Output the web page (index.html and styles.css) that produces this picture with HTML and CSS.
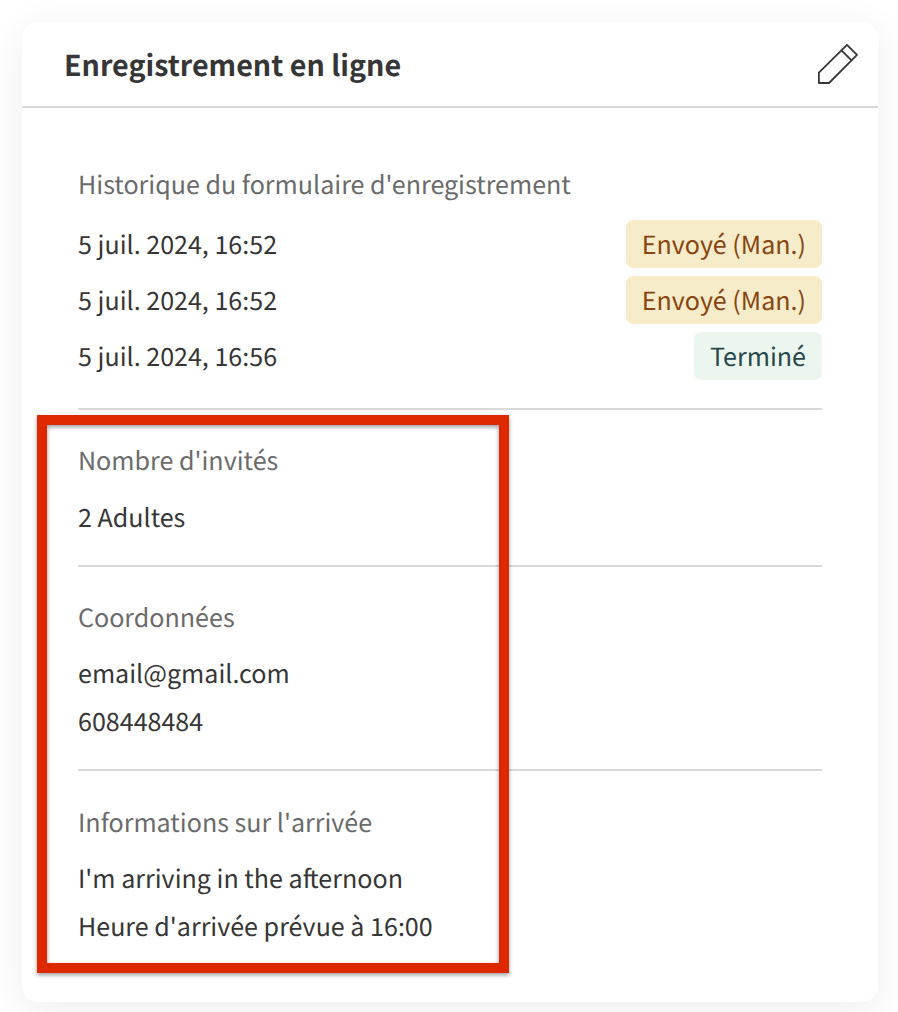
FILE: index.html
```html
<!DOCTYPE html>
<html lang="fr">
<head>
<meta charset="utf-8">
<title>Enregistrement en ligne</title>
<link rel="stylesheet" href="styles.css">
</head>
<body>
<main class="card">
  <header class="card-header">
    <h1 class="card-title">Enregistrement en ligne</h1>
    <svg class="edit" viewBox="0 0 44 44" width="44" height="44" fill="none" stroke="#363636" stroke-width="1.8" stroke-linejoin="round"><path d="M2.900 41V30.700L31 2.900L41 12.900L13 41ZM25.500 8.300L35.500 18.300"/></svg>
  </header>
  <div class="card-body">
    <section class="section history">
      <h2 class="label">Historique du formulaire d'enregistrement</h2>
      <div class="row"><span>5 juil. 2024, 16:52</span><span class="badge sent">Envoyé (Man.)</span></div>
      <div class="row"><span>5 juil. 2024, 16:52</span><span class="badge sent">Envoyé (Man.)</span></div>
      <div class="row"><span>5 juil. 2024, 16:56</span><span class="badge done">Terminé</span></div>
    </section>
    <section class="section guests">
      <h2 class="label">Nombre d'invités</h2>
      <p class="line">2 Adultes</p>
    </section>
    <section class="section contact">
      <h2 class="label">Coordonnées</h2>
      <p class="line">email@gmail.com</p>
      <p class="line">608448484</p>
    </section>
    <section class="section arrival">
      <h2 class="label">Informations sur l'arrivée</h2>
      <p class="line">I'm arriving in the a<span class="kern">f</span>ternoon</p>
      <p class="line">Heure d'arrivée prévue à 16:00</p>
    </section>
  </div>
</main>
<div class="highlight"></div>
</body>
</html>
```
FILE: styles.css
```css
* { box-sizing: border-box; }
body {
  margin: 0;
  padding: 22px 20px 10px 22px;
  height: 1012px;
  overflow: hidden;
  position: relative;
  background: #fff;
  color: #363636;
  font-family: "Noto Sans CJK SC", "Noto Sans", sans-serif;
  font-size: 25.07px;
  text-rendering: geometricPrecision;
}
h1, h2, p { margin: 0; }
.card {
  height: 980px;
  border-radius: 16px;
  background: #fff;
  box-shadow: 0 8px 40px rgba(0, 0, 0, 0.07);
}
.card-header {
  display: flex;
  align-items: center;
  justify-content: space-between;
  height: 86px;
  padding: 0 18px 0 42px;
  border-bottom: 2px solid #d9d9d9;
}
.card-title { font-size: 28.65px; font-weight: 700; line-height: 40px; padding-top: 2px; }
.edit { display: block; }
.card-body { padding: 52px 56px 0; }
.section { border-bottom: 2px solid #d9d9d9; }
.label { font-size: inherit; font-weight: 400; line-height: 48px; color: #6b6b6b; margin-bottom: 8px; }
.row { display: flex; justify-content: space-between; height: 48px; line-height: 48px; margin-bottom: 8px; }
.line { line-height: 48px; }
.kern { letter-spacing: -1.5px; }
.badge { padding: 0 16px; border-radius: 7px; }
.sent { background: #f7ecca; color: #87450f; }
.done { background: #ebf7ee; color: #27474a; }
.history { height: 250px; }
.history .label { margin-bottom: 12px; }
.guests { padding-top: 26px; height: 157px; }
.guests .label { margin-bottom: 9px; }
.contact { padding-top: 26px; height: 204px; }
.arrival { padding-top: 27px; border-bottom: 0; }
.highlight {
  position: absolute;
  left: 37px;
  top: 415px;
  width: 472px;
  height: 558px;
  border: 10px solid #de2800;
  box-shadow: 0 2px 4px rgba(0, 0, 0, 0.4), inset 0 2px 4px rgba(0, 0, 0, 0.4);
}
```
